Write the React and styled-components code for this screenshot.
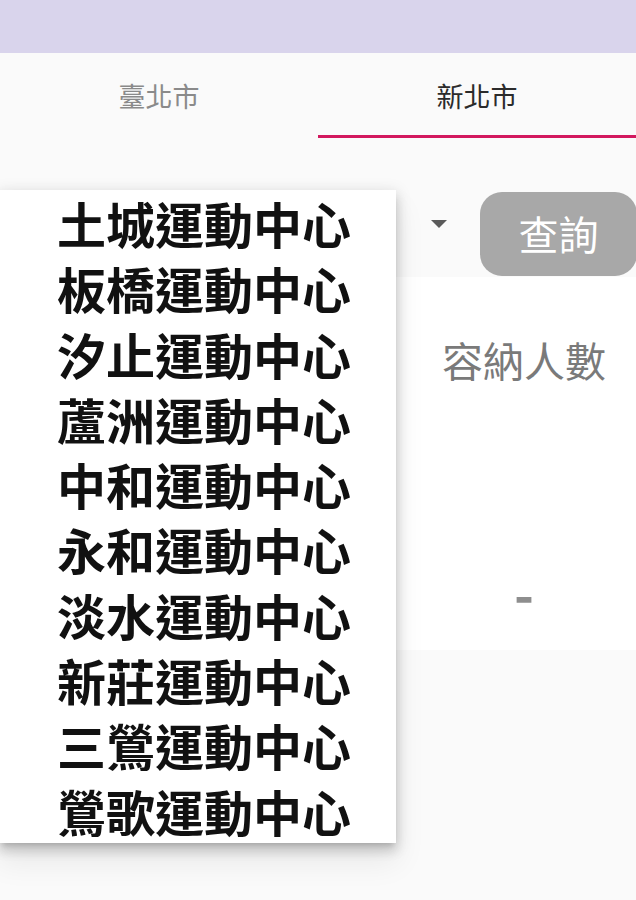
import React from "react";
import styled, { createGlobalStyle } from "styled-components";

const GlobalStyle = createGlobalStyle`
  html, body {
    margin: 0;
    padding: 0;
    background: #fafafa;
    font-family: "Noto Sans CJK TC", "Noto Sans", sans-serif;
  }
  * { box-sizing: border-box; }
`;

const Page = styled.div`
  position: relative;
  width: 636px;
  min-height: 900px;
  overflow: hidden;
  background: #fafafa;
`;

const AppBar = styled.div`
  height: 53px;
  background: #d9d4ec;
`;

const Tabs = styled.div`
  display: grid;
  grid-template-columns: 1fr 1fr;
`;

const Tab = styled.div`
  height: 85px;
  padding-top: 2px;
  display: flex;
  align-items: center;
  justify-content: center;
  font-size: 27px;
  line-height: 1;
  color: ${(p) => (p.$active ? "#2b2b2b" : "#8a8a8a")};
  border-bottom: 3px solid ${(p) => (p.$active ? "#d2185e" : "transparent")};
`;

const QueryRow = styled.div`
  display: flex;
  align-items: flex-start;
  gap: 20px;
  padding-top: 54px;
  height: 139px;
`;

const Select = styled.div`
  flex: 1;
  height: 64px;
  display: flex;
  align-items: center;
  justify-content: flex-end;
  padding-right: 13px;
`;

const Arrow = styled.svg`
  width: 16px;
  height: 8px;
  display: block;
`;

const QueryButton = styled.button`
  width: 157px;
  height: 84px;
  margin-right: -1px;
  border: none;
  border-radius: 22px;
  background: #a8a8a8;
  color: #ffffff;
  font-family: inherit;
  font-size: 40px;
  line-height: 1;
  padding: 0 0 2px 0;
  display: flex;
  align-items: center;
  justify-content: center;
`;

const Card = styled.div`
  background: #ffffff;
  display: grid;
  grid-template-columns: 412px 1fr;
  grid-template-rows: 162px 211px;
`;

const Cell = styled.div`
  display: flex;
  justify-content: center;
  align-items: ${(p) => (p.$bottom ? "flex-end" : "center")};
  padding-bottom: ${(p) => (p.$bottom ? "38px" : "0")};
  padding-top: ${(p) => (p.$bottom ? "0" : "2px")};
  color: #7a7a7a;
`;

const HeaderText = styled.span`
  font-size: 41px;
  line-height: 1;
`;

const Dash = styled.span`
  font-size: 54px;
  font-weight: 700;
  line-height: 40px;
  color: #8e8e8e;
`;

const Menu = styled.ul`
  position: absolute;
  top: 190px;
  left: 0;
  width: 396px;
  height: 653px;
  margin: 0;
  padding: 0 0 0 57px;
  list-style: none;
  background: #ffffff;
  box-shadow: 0px 5px 5px -3px rgba(0, 0, 0, 0.14),
    0px 8px 10px 1px rgba(0, 0, 0, 0.1), 0px 3px 14px 2px rgba(0, 0, 0, 0.1),
    0px 18px 28px 2px rgba(0, 0, 0, 0.07);
`;

const MenuItem = styled.li`
  height: 65.3px;
  line-height: 65.3px;
  font-size: 49px;
  font-weight: 700;
  color: #111111;
  white-space: nowrap;
`;

const venues = [
  "土城運動中心",
  "板橋運動中心",
  "汐止運動中心",
  "蘆洲運動中心",
  "中和運動中心",
  "永和運動中心",
  "淡水運動中心",
  "新莊運動中心",
  "三鶯運動中心",
  "鶯歌運動中心",
];

export default function App() {
  return (
    <Page>
      <GlobalStyle />
      <AppBar />
      <Tabs>
        <Tab>臺北市</Tab>
        <Tab $active>新北市</Tab>
      </Tabs>
      <QueryRow>
        <Select>
          <Arrow viewBox="0 0 16 8">
            <path d="M0 0 L16 0 L8 8 Z" fill="#5a5a5a" />
          </Arrow>
        </Select>
        <QueryButton>查詢</QueryButton>
      </QueryRow>
      <Card>
        <Cell />
        <Cell>
          <HeaderText>容納人數</HeaderText>
        </Cell>
        <Cell $bottom />
        <Cell $bottom>
          <Dash>-</Dash>
        </Cell>
      </Card>
      <Menu>
        {venues.map((v) => (
          <MenuItem key={v}>{v}</MenuItem>
        ))}
      </Menu>
    </Page>
  );
}
